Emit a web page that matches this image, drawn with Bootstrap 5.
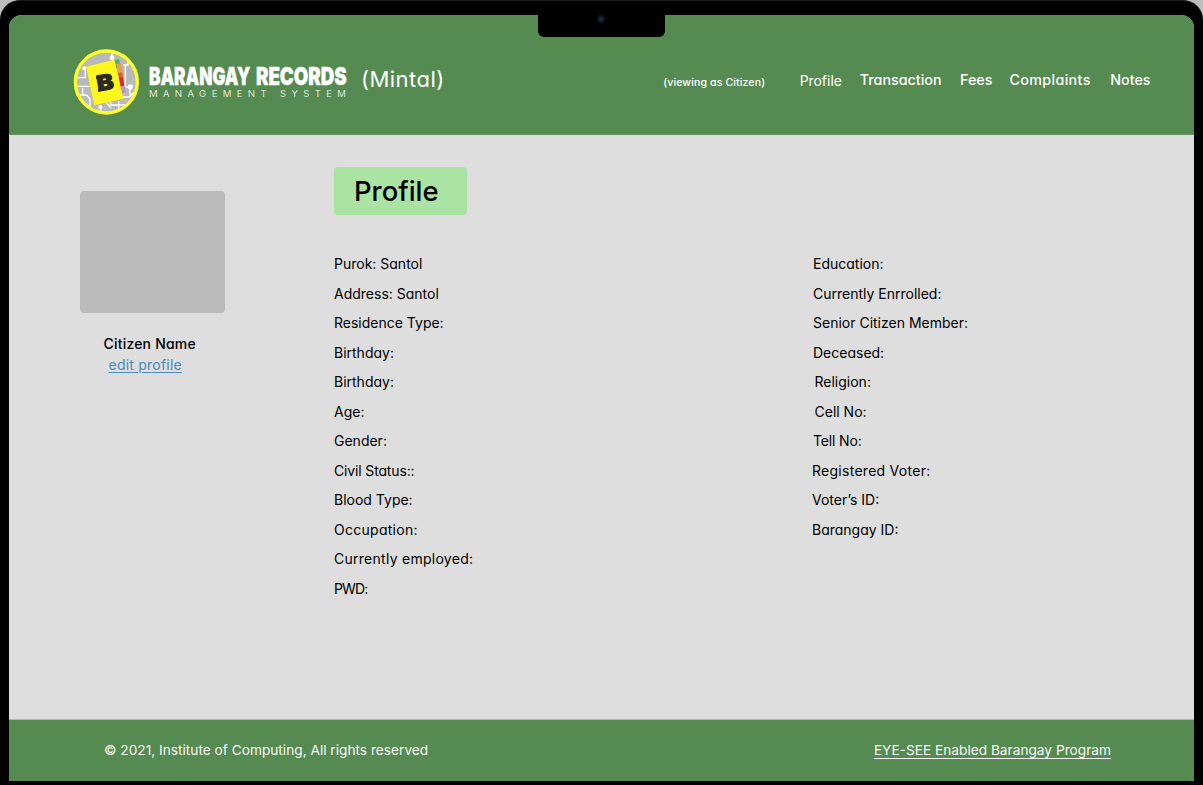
<!DOCTYPE html>
<html lang="en">
<head>
<meta charset="utf-8">
<meta name="viewport" content="width=device-width, initial-scale=1">
<title>Barangay Records – Profile</title>
<link href="https://cdn.jsdelivr.net/npm/bootstrap@5.3.0/dist/css/bootstrap.min.css" rel="stylesheet">
<style>
  body { height: 785px; overflow: hidden; background: #bdbdbd; color: #000; font-family: Inter, "Liberation Sans", sans-serif; font-size: 14px; font-feature-settings: "cv11"; }
  .device { height: 785px; background: #000; border-radius: 20px 20px 0 0; border-top: 1px solid #1c1c1c; padding: 14px 9px 4px; }
  .device-screen { height: 766px; border-radius: 13px 13px 0 0; overflow: hidden; background: #dedede; }
  .notch { top: 13px; left: 538px; width: 127px; height: 23px; background: #000; border-radius: 0 0 6px 6px; }
  .camera { top: 1px; left: 59px; width: 8px; height: 8px; border-radius: 50%; background: radial-gradient(circle, #172c4c 0 1.5px, #101416 2.5px); }
  .site-header { height: 120px; background: #558a50; color: #fff; padding: 0 43.5px 0 64px; border-bottom: 1px solid #6b9767; }
  .brand-mark { margin: 15px 0 0; }
  .brand-place { font-size: 22px; line-height: 28px; letter-spacing: .45px; margin: 9px 0 0 12px; }
  .role { font-size: 10.6px; font-weight: 500; letter-spacing: .1px; margin: 17px 0 0; }
  .menu { margin: 12px 0 0 34.5px; }
  .menu .nav-link { padding: 0; color: #fff; font-weight: 500; font-size: 14.3px; }
  .menu .nav-link.active { font-weight: 400; font-size: 13.9px; padding-top: 2px; }
  .site-footer { height: 62px; background: #558a50; color: #f6f9f5; padding: 0 83px 0 95px; border-top: 1px solid #a5bfa2; font-size: 13.7px; font-feature-settings: normal; }
  .site-footer a { font-size: 13.7px; text-underline-offset: 3px; }
  .side { width: 325px; padding: 56px 0 0 71px; }
  .avatar { width: 145px; height: 122px; border-radius: 4px; background: #bbb; }
  .citizen { font-weight: 500; letter-spacing: .2px; margin: 20px 0 0 23.5px; }
  .edit { color: #4d8ac4; letter-spacing: .22px; margin-left: 28.5px; text-underline-offset: 2px; }
  .heading { width: 133px; height: 48px; margin-top: 32px; border-radius: 4px; background: #abe3a4; font-size: 27.4px; font-weight: 500; line-height: 1; padding: 2px 0 0 20px; }
  .facts { line-height: 29.5px; margin-top: 34.2px; }
  .facts ul { width: 479px; }
  .facts ul + ul { width: 300px; }
  .ls-wide { letter-spacing: .27px; }
  .ls-tight { letter-spacing: -.15px; }
  .ls-tighter { letter-spacing: -.9px; }
  .indent { padding-left: 1.5px; }
  .outdent { margin-left: -1px; }
</style>
</head>
<body>
<div class="device position-relative">
  <div class="device-screen d-flex flex-column">
    <header class="site-header d-flex align-items-center">
      <div class="brand-mark d-flex align-items-center flex-shrink-0">
        <svg width="66" height="66" viewBox="21 22 198 198" aria-hidden="true">
          <clipPath id="disc"><circle cx="121" cy="121" r="90"/></clipPath>
          <circle cx="121" cy="121" r="93" fill="#b9b9b9"/>
          <g clip-path="url(#disc)" fill="none" stroke="#fff" stroke-width="4">
            <path d="M22 108H58V76M26 134H72M45 160H62L72 172V200M50 138V160H34M138 56V30M172 70H186V30M178 68V134L192 140V165M170 166H190L206 150M158 178V210M134 181V190H200M104 190V215M122 184L136 200M72 192H50"/>
          </g>
          <g fill="#fff"><circle cx="138" cy="48" r="7"/><circle cx="55" cy="80" r="6"/><circle cx="193" cy="136" r="8"/><circle cx="103" cy="196" r="6"/></g>
          <path d="M146 55l13-3 5 24-13 3z" fill="#4eb071"/>
          <path d="M151 67l14-3 4 28-12 3z" fill="#e9a13c"/>
          <path d="M156 94l13-2 3 17-12 2z" fill="#e35b29"/>
          <path d="M159 108l12-2 4 26-12 3z" fill="#d62e25"/>
          <path d="M164 135l12-2 4 19-12 3z" fill="#ba94c7"/>
          <path d="M60 75L145 54L172 171L85 191Z" fill="#fff61d"/>
          <text x="117" y="145" text-anchor="middle" transform="rotate(-9 117 123)" font-family="Inter, sans-serif" font-weight="900" font-size="64" textLength="50" lengthAdjust="spacingAndGlyphs" fill="#2b2b23" stroke="#2b2b23" stroke-width="3">B</text>
          <path d="M90 104l14-2v9l-13 2zM96 141l14-2v9l-13 2z" fill="#2b2b23"/>
          <circle cx="121" cy="121" r="93" fill="none" stroke="#fcff2b" stroke-width="10"/>
        </svg>
        <svg class="ms-2" width="202" height="52" viewBox="146.5 56 202 52" fill="#fff" font-family="Inter, sans-serif">
          <g transform="scale(.7 1)" font-size="24.6" font-weight="900" stroke="#fff" stroke-width=".4">
            <text x="212" y="84.7" textLength="145" lengthAdjust="spacingAndGlyphs">BARANGAY</text>
            <text x="365" y="84.7" textLength="129.5" lengthAdjust="spacingAndGlyphs">RECORDS</text>
          </g>
          <text x="148.5" y="97.3" font-size="9.6" font-weight="300" textLength="197" lengthAdjust="spacing">MANAGEMENT SYSTEM</text>
        </svg>
      </div>
      <span class="brand-place">(Mintal)</span>
      <span class="role ms-auto">(viewing as Citizen)</span>
      <nav class="menu nav align-items-start flex-nowrap">
        <a class="nav-link active" href="#">Profile</a>
        <a class="nav-link" href="#" style="margin-left:18px">Transaction</a>
        <a class="nav-link" href="#" style="margin-left:18.5px">Fees</a>
        <a class="nav-link" href="#" style="margin-left:17px;letter-spacing:.35px">Complaints</a>
        <a class="nav-link" href="#" style="margin-left:19.5px">Notes</a>
      </nav>
    </header>
    <main class="flex-fill d-flex">
      <aside class="side flex-shrink-0">
        <div class="avatar"></div>
        <div class="citizen">Citizen Name</div>
        <a class="edit" href="#">edit profile</a>
      </aside>
      <section>
        <h1 class="heading d-flex align-items-center mb-0">Profile</h1>
        <div class="facts d-flex">
          <ul class="list-unstyled mb-0">
            <li>Purok: Santol</li>
            <li>Address: Santol</li>
            <li>Residence Type:</li>
            <li>Birthday:</li>
            <li>Birthday:</li>
            <li>Age:</li>
            <li>Gender:</li>
            <li class="ls-tight">Civil Status::</li>
            <li>Blood Type:</li>
            <li class="ls-wide">Occupation:</li>
            <li class="ls-wide">Currently employed:</li>
            <li class="ls-tighter">PWD:</li>
          </ul>
          <ul class="list-unstyled mb-0">
            <li>Education:</li>
            <li>Currently Enrrolled:</li>
            <li>Senior Citizen Member:</li>
            <li>Deceased:</li>
            <li class="indent">Religion:</li>
            <li class="indent">Cell No:</li>
            <li class="ls-tight">Tell No:</li>
            <li class="outdent ls-wide">Registered Voter:</li>
            <li class="outdent">Voter’s ID:</li>
            <li class="outdent">Barangay ID:</li>
          </ul>
        </div>
      </section>
    </main>
    <footer class="site-footer d-flex align-items-center justify-content-between">
      <span>© 2021, Institute of Computing, All rights reserved</span>
      <a class="text-reset" href="#">EYE-SEE Enabled Barangay Program</a>
    </footer>
  </div>
  <div class="notch position-absolute"><div class="camera position-absolute"></div></div>
</div>
<script src="https://cdn.jsdelivr.net/npm/bootstrap@5.3.0/dist/js/bootstrap.bundle.min.js"></script>
</body>
</html>
